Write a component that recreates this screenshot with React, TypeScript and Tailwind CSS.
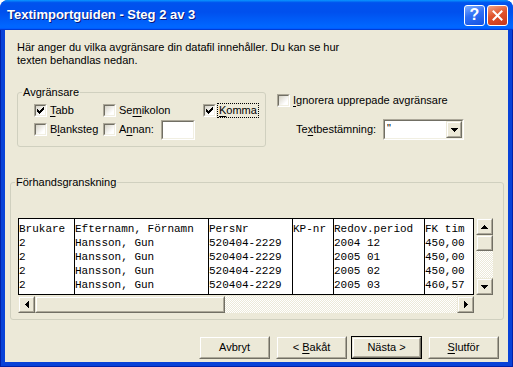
import React from "react";

type Dir = "up" | "down" | "left" | "right";

function Arrow({ dir }: { dir: Dir }) {
  const vertical = dir === "up" || dir === "down";
  const rects = [0, 1, 2, 3].map((i) => {
    if (dir === "up") return { x: 3 - i, y: i, w: 2 * i + 1, h: 1 };
    if (dir === "down") return { x: i, y: i, w: 7 - 2 * i, h: 1 };
    if (dir === "left") return { x: i, y: 3 - i, w: 1, h: 2 * i + 1 };
    return { x: i, y: i, w: 1, h: 7 - 2 * i };
  });
  return (
    <svg width={vertical ? 7 : 4} height={vertical ? 4 : 7} shapeRendering="crispEdges">
      {rects.map((r, k) => (
        <rect key={k} x={r.x} y={r.y} width={r.w} height={r.h} fill="#000" />
      ))}
    </svg>
  );
}

function Raised({ className = "", children }: { className?: string; children?: React.ReactNode }) {
  return (
    <div className={`shrink-0 border border-t-[#ECE9D8] border-l-[#ECE9D8] border-b-[#716F64] border-r-[#716F64] ${className}`}>
      <div className="w-full h-full border border-t-white border-l-white border-b-[#ACA899] border-r-[#ACA899] bg-[#ECE9D8] flex items-center justify-center">
        {children}
      </div>
    </div>
  );
}

function Sunken({ className = "", children }: { className?: string; children?: React.ReactNode }) {
  return (
    <div className={`shrink-0 border border-t-[#ACA899] border-l-[#ACA899] border-b-white border-r-white ${className}`}>
      <div className="w-full h-full border border-t-[#716F64] border-l-[#716F64] border-b-[#F1EFE2] border-r-[#F1EFE2] bg-white flex items-stretch">
        {children}
      </div>
    </div>
  );
}

function Check({ checked }: { checked?: boolean }) {
  const starts = [2, 3, 4, 3, 2, 1, 0];
  return (
    <div className="w-[13px] h-[13px] shrink-0 border border-t-[#ACA899] border-l-[#ACA899] border-b-white border-r-white">
      <div className="w-full h-full border border-t-[#716F64] border-l-[#716F64] border-b-[#F1EFE2] border-r-[#F1EFE2] bg-[linear-gradient(135deg,#D6D3C6,#ffffff_75%)] flex items-center justify-center">
        {checked && (
          <svg width={7} height={7} shapeRendering="crispEdges">
            {starts.map((s, i) => (
              <rect key={i} x={i} y={s} width={1} height={3} fill="#000" />
            ))}
          </svg>
        )}
      </div>
    </div>
  );
}

function U({ children }: { children: React.ReactNode }) {
  return <span className="underline decoration-1 underline-offset-[2px]">{children}</span>;
}

const columns = [
  { w: "w-[56px]", head: "Brukare", vals: ["2", "2", "2", "2"] },
  { w: "w-[134px]", head: "Efternamn, Förnamn", vals: ["Hansson, Gun", "Hansson, Gun", "Hansson, Gun", "Hansson, Gun"] },
  { w: "w-[84px]", head: "PersNr", vals: ["520404-2229", "520404-2229", "520404-2229", "520404-2229"] },
  { w: "w-[41px]", head: "KP-nr", vals: ["", "", "", ""] },
  { w: "w-[91px]", head: "Redov.period", vals: ["2004 12", "2005 01", "2005 02", "2005 03"] },
  { w: "w-[49px]", head: "FK tim", vals: ["450,00", "450,00", "450,00", "460,57"] },
];

const dither =
  "bg-[repeating-conic-gradient(#ffffff_0%_25%,#ece9d8_0%_50%)] bg-size-[2px_2px]";

function Button({ children, def = false, className = "" }: { children: React.ReactNode; def?: boolean; className?: string }) {
  const inner = (
    <Raised className="w-full h-full">
      <span className="leading-[13px]">{children}</span>
    </Raised>
  );
  if (def)
    return <div className={`w-[71px] h-[23px] shrink-0 border border-black flex ${className}`}>{inner}</div>;
  return <div className={`w-[71px] h-[23px] shrink-0 flex ${className}`}>{inner}</div>;
}

export default function App() {
  return (
    <div className="w-[513px] h-[367px] bg-white font-['Liberation_Sans',sans-serif] text-[11px] text-black">
      <div className="w-full h-full flex flex-col rounded-t-[8px] overflow-hidden bg-[#0842D8]">
        {/* Title bar */}
        <div className="h-[30px] shrink-0 flex items-center pl-[7px] pr-[5px] bg-[linear-gradient(180deg,#0997FF_0%,#0053EE_9%,#0050EE_40%,#0066FF_86%,#0066FF_92%,#005BFF_95%,#003DD7_97%,#003DD7_100%)]">
          <span className="flex-1 font-['Liberation_Sans',sans-serif] font-bold text-[13px] text-white leading-[16px] [text-shadow:1px_1px_0_#0a1a7a]">
            Textimportguiden - Steg 2 av 3
          </span>
          <div className="w-[21px] h-[21px] rounded-[3px] border border-white bg-[linear-gradient(160deg,#7FAEFF,#2F6FF5_45%,#1553E2)] flex items-center justify-center">
            <span className="font-['Liberation_Sans',sans-serif] font-bold text-[16px] leading-[16px] text-white">?</span>
          </div>
          <div className="ml-[2px] w-[21px] h-[21px] rounded-[3px] border border-white bg-[linear-gradient(160deg,#F0A486,#E0532C_45%,#C6361A)] flex items-center justify-center">
            <svg width={11} height={11}>
              <path d="M1.5 1.5 L9.5 9.5 M9.5 1.5 L1.5 9.5" stroke="#fff" strokeWidth={2} strokeLinecap="square" />
            </svg>
          </div>
        </div>

        {/* Body with blue frame */}
        <div className="flex-1 flex px-[4px] pb-[4px] border-x border-b border-[#0020A8]">
          <div className="flex-1 bg-[#ECE9D8] flex flex-col">
            <p className="mt-[11px] ml-[12px] leading-[13px]">
              Här anger du vilka avgränsare din datafil innehåller. Du kan se hur
              <br />
              texten behandlas nedan.
            </p>

            {/* Upper row */}
            <div className="mt-[25px] flex items-start">
              <div className="relative ml-[12px] w-[249px] h-[55px] border border-[#D0D0BF] rounded-[3px]">
                <span className="absolute -top-[7px] left-[4px] px-[1px] bg-[#ECE9D8] leading-[13px]">Avgränsare</span>
                <div className="pt-[8px] pl-[16px] grid grid-cols-[69px_100px_1fr] auto-rows-[19px] items-center">
                  <div className="flex items-center gap-[3px]">
                    <Check checked />
                    <span className="leading-[13px]"><U>T</U>abb</span>
                  </div>
                  <div className="flex items-center gap-[3px]">
                    <Check />
                    <span className="leading-[13px]">Se<U>m</U>ikolon</span>
                  </div>
                  <div className="flex items-center gap-[1px]">
                    <Check checked />
                    <span className="leading-[13px] border border-dotted border-black px-[1px]"><U>K</U>omma</span>
                  </div>
                  <div className="flex items-center gap-[3px]">
                    <Check />
                    <span className="leading-[13px]">B<U>l</U>anksteg</span>
                  </div>
                  <div className="col-span-2 flex items-center">
                    <Check />
                    <span className="ml-[3px] w-[42px] leading-[13px]">A<U>n</U>nan:</span>
                    <Sunken className="w-[34px] h-[20px]" />
                  </div>
                </div>
              </div>

              <div className="ml-[11px] flex flex-col">
                <div className="mt-[2px] flex items-center gap-[3px]">
                  <Check />
                  <span className="leading-[13px]"><U>I</U>gnorera upprepade avgränsare</span>
                </div>
                <div className="mt-[12px] ml-[19px] flex items-center">
                  <span className="w-[87px] leading-[13px]">Te<U>x</U>tbestämning:</span>
                  <Sunken className="w-[81px] h-[21px]">
                    <span className="flex-1 pl-[2px] leading-[13px] pt-[1px]">"</span>
                    <Raised className="w-[16px] h-full">
                      <Arrow dir="down" />
                    </Raised>
                  </Sunken>
                </div>
              </div>
            </div>

            {/* Preview */}
            <div className="relative mt-[35px] ml-[5px] w-[494px] h-[138px] border border-[#D0D0BF] rounded-[3px]">
              <span className="absolute -top-[7px] left-[4px] px-[1px] bg-[#ECE9D8] leading-[13px]">Förhandsgranskning</span>
              <div className="pt-[35px] pl-[7px] flex flex-col">
                <div className="flex items-start">
                  <div className="flex h-[77px] w-[456px] border-l border-y border-black bg-white font-['Liberation_Mono',monospace] text-[11px] leading-[14px] overflow-hidden">
                    {columns.map((c, i) => (
                      <div key={i} className={`${c.w} shrink-0 h-full border-r border-black pt-[3px] whitespace-pre overflow-hidden`}>
                        <div>{c.head}</div>
                        {c.vals.map((v, j) => (
                          <div key={j} className="h-[14px]">{v}</div>
                        ))}
                      </div>
                    ))}
                  </div>
                  <div className="ml-[2px] w-[17px] h-[77px] flex flex-col">
                    <Raised className="w-[17px] h-[17px]"><Arrow dir="up" /></Raised>
                    <Raised className="w-[17px] h-[16px]" />
                    <div className={`flex-1 ${dither}`} />
                    <Raised className="w-[17px] h-[17px]"><Arrow dir="down" /></Raised>
                  </div>
                </div>
                <div className="mt-[1px] w-[456px] h-[17px] flex">
                  <Raised className="w-[17px] h-[17px]"><Arrow dir="left" /></Raised>
                  <Raised className="w-[190px] h-[17px]" />
                  <div className={`flex-1 ${dither}`} />
                  <Raised className="w-[17px] h-[17px]"><Arrow dir="right" /></Raised>
                </div>
              </div>
            </div>

            {/* Buttons */}
            <div className="mt-[16px] flex items-center">
              <Button className="ml-[194px]">Avbryt</Button>
              <Button className="ml-[6px]">&lt; <U>B</U>akåt</Button>
              <Button def className="ml-[4px]">Nästa &gt;</Button>
              <Button className="ml-[6px]"><U>S</U>lutför</Button>
            </div>
          </div>
        </div>
      </div>
    </div>
  );
}
